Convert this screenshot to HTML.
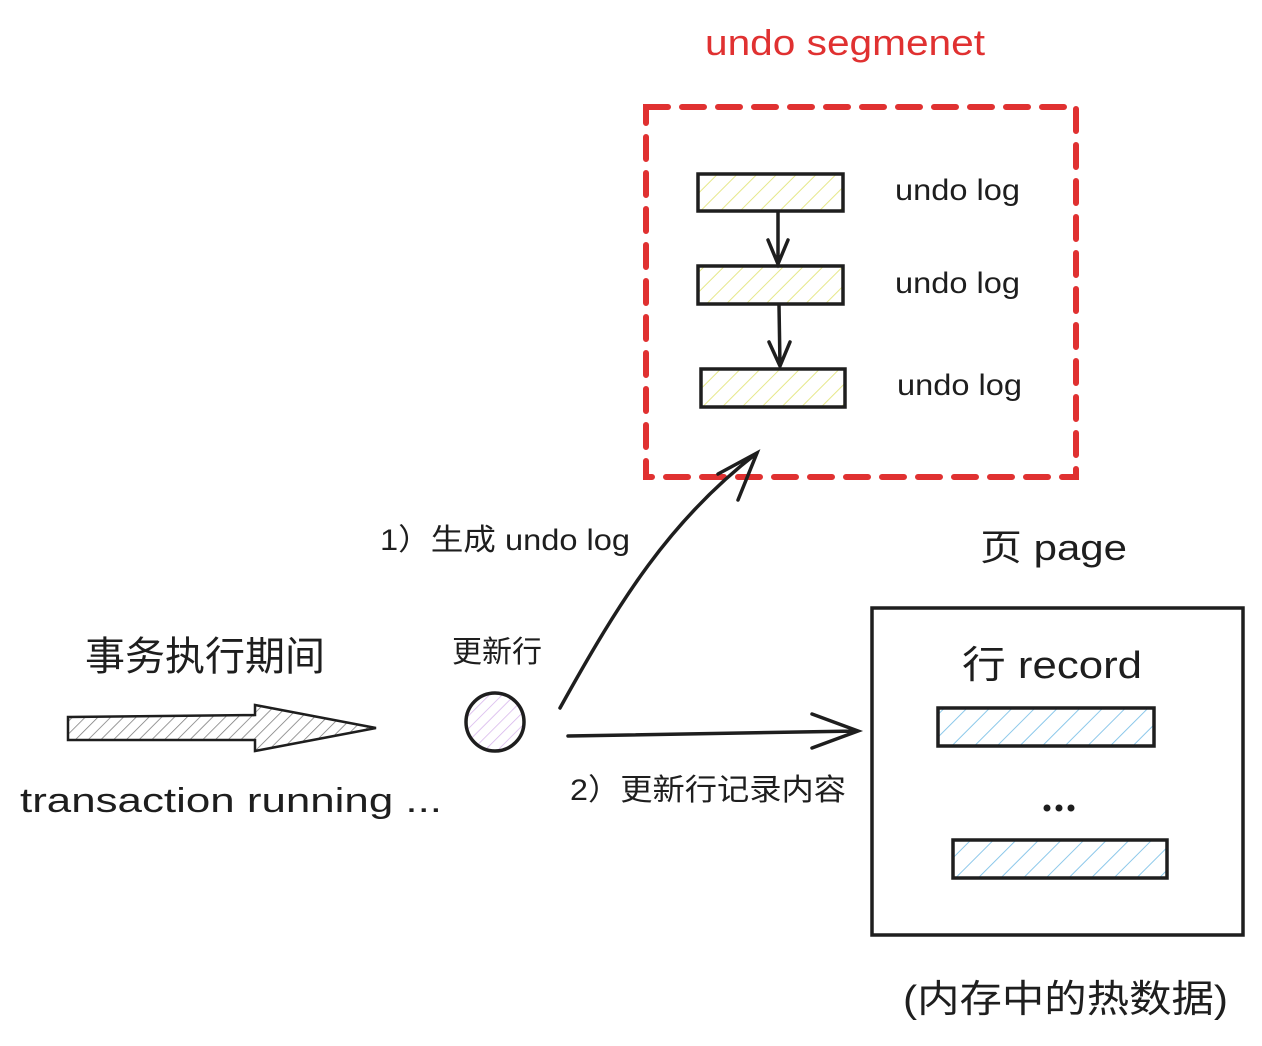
<!DOCTYPE html>
<html><head><meta charset="utf-8"><style>
html,body{margin:0;padding:0;background:#fff;width:1262px;height:1046px;overflow:hidden}
text{font-family:"Liberation Sans","Noto Sans CJK SC",sans-serif;fill:#1e1e1e}
</style></head><body>
<svg width="1262" height="1046" viewBox="0 0 1262 1046" xmlns="http://www.w3.org/2000/svg">
<defs>
<pattern id="hy" width="14" height="14" patternUnits="userSpaceOnUse" patternTransform="rotate(45)"><line x1="0" y1="0" x2="0" y2="14" stroke="#e6e88a" stroke-width="2"/></pattern>
<pattern id="hb" width="16" height="16" patternUnits="userSpaceOnUse" patternTransform="rotate(45)"><line x1="0" y1="0" x2="0" y2="16" stroke="#8cc8ea" stroke-width="2"/></pattern>
<pattern id="hg" width="9" height="9" patternUnits="userSpaceOnUse" patternTransform="rotate(45)"><line x1="0" y1="0" x2="0" y2="9" stroke="#777" stroke-width="1.5"/></pattern>
<pattern id="hp" width="9" height="9" patternUnits="userSpaceOnUse" patternTransform="rotate(45)"><line x1="0" y1="0" x2="0" y2="9" stroke="#d6b3ec" stroke-width="1.5"/></pattern>
</defs>
<text x="705" y="55" font-size="36" style="fill:#e03131" textLength="280" lengthAdjust="spacingAndGlyphs">undo segmenet</text>
<rect x="646" y="107" width="430" height="370" fill="none" stroke="#e03131" stroke-width="6" stroke-dasharray="22 14" stroke-linecap="round"/>
<g stroke="#1e1e1e" stroke-width="3.5">
<rect x="698" y="174" width="145" height="37" fill="url(#hy)"/>
<rect x="698" y="266" width="145" height="38" fill="url(#hy)"/>
<rect x="701" y="369" width="144" height="38" fill="url(#hy)"/>
</g>
<g stroke="#1e1e1e" stroke-width="3.5" fill="none" stroke-linecap="round">
<path d="M778 212 L778 264 M768 240 L778 264 L788 240"/>
<path d="M779 305 L780 366 M769 342 L780 366 L790 342"/>
<path d="M560 708 C620 600 670 520 757 453 M718 474 L757 453 L738 500"/>
<path d="M568 736 L858 731 M812 714 L858 731 L812 748"/>
</g>
<text x="895" y="200" font-size="30" textLength="125" lengthAdjust="spacingAndGlyphs">undo log</text>
<text x="895" y="293" font-size="30" textLength="125" lengthAdjust="spacingAndGlyphs">undo log</text>
<text x="897" y="395" font-size="30" textLength="125" lengthAdjust="spacingAndGlyphs">undo log</text>
<text x="380" y="550" font-size="30" textLength="250" lengthAdjust="spacingAndGlyphs">1）生成 undo log</text>
<text x="980" y="560" font-size="36" textLength="147" lengthAdjust="spacingAndGlyphs">页 page</text>
<rect x="872" y="608" width="371" height="327" fill="none" stroke="#1e1e1e" stroke-width="3.5"/>
<text x="962" y="678" font-size="38" textLength="180" lengthAdjust="spacingAndGlyphs">行 record</text>
<g stroke="#1e1e1e" stroke-width="3.5">
<rect x="938" y="708" width="216" height="38" fill="url(#hb)"/>
<rect x="953" y="840" width="214" height="38" fill="url(#hb)"/>
</g>
<g fill="#1e1e1e"><circle cx="1047" cy="808" r="3.5"/><circle cx="1059" cy="808" r="3.5"/><circle cx="1071" cy="808" r="3.5"/></g>
<text x="903" y="1012" font-size="38" textLength="325" lengthAdjust="spacingAndGlyphs">(内存中的热数据)</text>
<text x="85" y="670" font-size="40">事务执行期间</text>
<path d="M68 717 L255 715 L255 705 L376 728 L255 751 L255 740 L68 740 Z" fill="url(#hg)" stroke="#1e1e1e" stroke-width="2.5"/>
<text x="20" y="812" font-size="34" textLength="422" lengthAdjust="spacingAndGlyphs">transaction running ...</text>
<text x="452" y="662" font-size="30">更新行</text>
<circle cx="495" cy="722" r="29" fill="url(#hp)" stroke="#1e1e1e" stroke-width="3.5"/>
<text x="570" y="800" font-size="30" textLength="276" lengthAdjust="spacingAndGlyphs">2）更新行记录内容</text>
</svg>
</body></html>
